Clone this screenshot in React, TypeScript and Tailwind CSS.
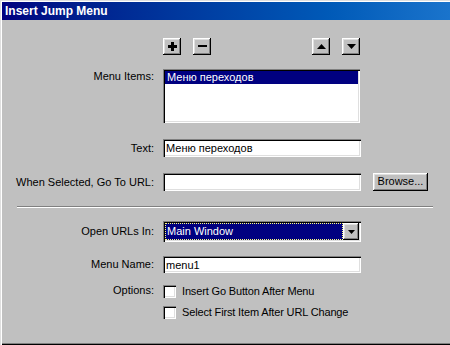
import type { ReactNode } from "react";

const raised =
  "bg-[#c0c0c0] shadow-[inset_-1px_-1px_0_#000,inset_1px_1px_0_#fff,inset_-2px_-2px_0_#808080,inset_2px_2px_0_#dfdfdf]";
const sunken =
  "bg-white shadow-[inset_1px_1px_0_#808080,inset_2px_2px_0_#000,inset_-1px_-1px_0_#fff,inset_-2px_-2px_0_#dfdfdf]";

function Row({ label, children, className = "" }: { label: string; children: ReactNode; className?: string }) {
  return (
    <div className={`flex items-center ${className}`}>
      <div className="w-[155px] text-right pr-[1px]">{label}</div>
      <div className="ml-2 flex items-center">{children}</div>
    </div>
  );
}

function Input({ value = "", h = "h-[18px]" }: { value?: string; h?: string }) {
  return (
    <div className={`${sunken} ${h} w-[198px] flex items-center pl-[3px] pt-[1px]`}>
      <span>{value}</span>
    </div>
  );
}

function IconButton({ children }: { children: ReactNode }) {
  return <div className={`${raised} w-[18px] h-[17px] flex items-center justify-center`}>{children}</div>;
}

function Checkbox({ label, className = "" }: { label: string; className?: string }) {
  return (
    <div className={`flex items-center h-[16px] ${className}`}>
      <div className="w-[163px]" />
      <div className={`${sunken} w-[13px] h-[13px]`} />
      <span className="ml-[6px] tracking-[-0.15px]">{label}</span>
    </div>
  );
}

export default function App() {
  return (
    <div className="w-[450px] h-[345px] overflow-hidden bg-[#c0c0c0] text-black text-[11px] leading-[13px] font-['Liberation_Sans',Arial,sans-serif] shadow-[inset_1px_1px_0_#dfdfdf,inset_2px_2px_0_#fff,inset_0_-1px_0_#000,inset_0_-2px_0_#808080] pl-[2px] pt-[2px]">
      {/* title bar */}
      <div className="h-[18px] bg-gradient-to-r from-[#000080] to-[#1a74cc] flex items-center pl-[3px]">
        <span className="text-white font-bold text-[12px]">Insert Jump Menu</span>
      </div>

      <div className="-ml-[2px]">
        {/* list controls */}
        <div className="mt-[18px] flex items-center pl-[163px]">
          <IconButton>
            <svg width="9" height="9" viewBox="0 0 9 9">
              <rect x="3" y="0" width="3" height="9" fill="#000" />
              <rect x="0" y="3" width="9" height="3" fill="#000" />
            </svg>
          </IconButton>
          <div className="ml-[12px]">
            <IconButton>
              <svg width="9" height="3" viewBox="0 0 9 3">
                <rect x="0" y="0" width="9" height="2" fill="#000" />
              </svg>
            </IconButton>
          </div>
          <div className="ml-[101px]">
            <IconButton>
              <svg width="9" height="5" viewBox="0 0 9 5">
                <polygon points="4.5,0 9,5 0,5" fill="#000" />
              </svg>
            </IconButton>
          </div>
          <div className="ml-[12px]">
            <IconButton>
              <svg width="9" height="5" viewBox="0 0 9 5">
                <polygon points="0,0 9,0 4.5,5" fill="#000" />
              </svg>
            </IconButton>
          </div>
        </div>

        {/* menu items */}
        <div className="mt-[14px] flex items-start">
          <div className="w-[155px] text-right pr-[1px] mt-[1px]">Menu Items:</div>
          <div className={`${sunken} ml-2 w-[197px] h-[54px] p-[2px]`}>
            <div className="bg-[#000080] text-white h-[13px] pl-[2px]">Меню переходов</div>
          </div>
        </div>

        <Row label="Text:" className="mt-[16px]">
          <Input value="Меню переходов" />
        </Row>

        <Row label="When Selected, Go To URL:" className="mt-[16px]">
          <Input />
          <div className={`${raised} ml-[12px] w-[55px] h-[18px] -mt-[1px] flex items-center justify-center`}>
            Browse...
          </div>
        </Row>

        {/* separator */}
        <div className="mt-[15px] ml-[17px] w-[416px] h-[2px] border-t border-t-[#808080] border-b border-b-white" />

        <Row label="Open URLs In:" className="mt-[13px]">
          <div className={`${sunken} w-[198px] h-[21px] flex items-center p-[2px]`}>
            <div className="flex-1 h-full bg-[#000080] border border-dotted border-[#ffff80] text-white flex items-center pl-[1px]">
              Main Window
            </div>
            <div className={`${raised} w-[16px] h-full flex items-center justify-center`}>
              <svg width="7" height="4" viewBox="0 0 7 4">
                <polygon points="0,0 7,0 3.5,4" fill="#000" />
              </svg>
            </div>
          </div>
        </Row>

        <Row label="Menu Name:" className="mt-[14px]">
          <Input value="menu1" h="h-[17px]" />
        </Row>

        <div className="mt-[10px] relative">
          <div className="absolute left-0 top-[1px] w-[155px] text-right pr-[1px]">Options:</div>
          <Checkbox label="Insert Go Button After Menu" />
        </div>
        <Checkbox label="Select First Item After URL Change" className="mt-[5px]" />
      </div>
    </div>
  );
}
